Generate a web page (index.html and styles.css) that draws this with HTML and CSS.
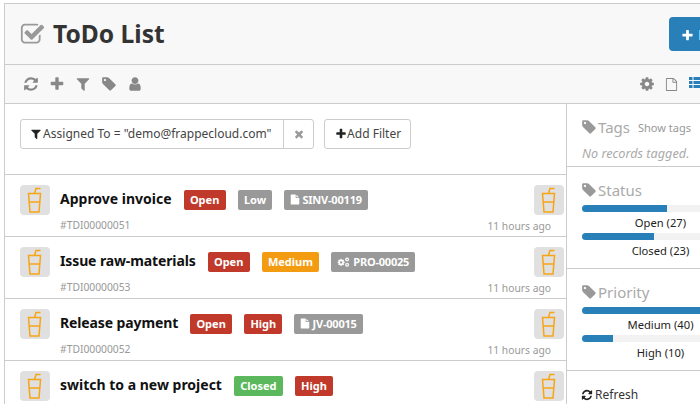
FILE: index.html
```html
<!DOCTYPE html>
<html lang="en">
<head>
<meta charset="UTF-8">
<meta name="viewport" content="width=device-width, initial-scale=1.0">
<title>ToDo List</title>
<link rel="stylesheet" href="styles.css">
</head>
<body>
<svg class="sprite" xmlns="http://www.w3.org/2000/svg">
  <symbol id="i-plus" viewBox="0 0 1792 1792"><path d="M1600 736v192q0 40-28 68t-68 28h-416v416q0 40-28 68t-68 28h-192q-40 0-68-28t-28-68v-416h-416q-40 0-68-28t-28-68v-192q0-40 28-68t68-28h416v-416q0-40 28-68t68-28h192q40 0 68 28t28 68v416h416q40 0 68 28t28 68z"/></symbol>
  <symbol id="i-filter" viewBox="0 0 1792 1792"><path d="M1595 295q17 41-14 70l-493 493v742q0 42-39 59-13 5-25 5-27 0-45-19l-256-256q-19-19-19-45v-486l-493-493q-31-29-14-70 17-39 59-39h1280q42 0 59 39z"/></symbol>
  <symbol id="i-tag" viewBox="0 0 1792 1792"><path d="M576 448q0-53-37.500-90.500t-90.500-37.500-90.500 37.500-37.500 90.500 37.500 90.500 90.500 37.500 90.500-37.500 37.500-90.500zm1067 576q0 53-37 90l-491 492q-39 37-91 37-53 0-90-37l-715-716q-38-37-64.500-101t-26.500-117v-416q0-52 38-90t90-38h416q53 0 117 26.500t102 64.500l715 714q37 39 37 91z"/></symbol>
  <symbol id="i-user" viewBox="0 0 1792 1792"><path d="M1536 1399q0 109-62.500 187t-150.500 78h-854q-88 0-150.500-78t-62.500-187q0-85 8.500-160.500t31.500-152 58.500-131 94-89 134.500-34.500q131 128 313 128t313-128q76 0 134.500 34.500t94 89 58.500 131 31.500 152 8.500 160.500zm-256-887q0 159-112.500 271.500t-271.500 112.500-271.500-112.500-112.500-271.500 112.500-271.500 271.500-112.500 271.500 112.500 112.500 271.500z"/></symbol>
  <symbol id="i-refresh" viewBox="0 0 1792 1792"><path d="M1639 1056q0 5-1 7-64 268-268 434.500t-478 166.500q-146 0-282.500-55t-243.500-157l-129 129q-19 19-45 19t-45-19-19-45v-448q0-26 19-45t45-19h448q26 0 45 19t19 45-19 45l-137 137q71 66 161 102t187 36q134 0 250-65t186-179q11-17 53-117 8-23 30-23h192q13 0 22.500 9.500t9.500 22.500zm25-800v448q0 26-19 45t-45 19h-448q-26 0-45-19t-19-45 19-45l138-138q-148-137-349-137-134 0-250 65t-186 179q-11 17-53 117-8 23-30 23h-199q-13 0-22.500-9.500t-9.500-22.500v-7q65-268 270-434.500t480-166.500q146 0 284 55.500t245 156.500l130-129q19-19 45-19t45 19 19 45z"/></symbol>
  <symbol id="i-cog" viewBox="0 0 1792 1792"><path d="M1152 896q0-106-75-181t-181-75-181 75-75 181 75 181 181 75 181-75 75-181zm512-109v222q0 12-8 23t-20 13l-185 28q-19 54-39 91 35 50 107 138 10 12 10 25t-9 23q-27 37-99 108t-94 71q-12 0-26-9l-138-108q-44 23-91 38-16 136-29 186-7 28-36 28h-222q-14 0-24.500-8.500t-11.500-21.500l-28-184q-49-16-90-37l-141 107q-10 9-25 9-14 0-25-11-126-114-165-168-7-10-7-23 0-12 8-23 15-21 51-66.500t54-70.500q-27-50-41-99l-183-27q-13-2-21-12.500t-8-23.500v-222q0-12 8-23t19-13l186-28q14-46 39-92-40-57-107-138-10-12-10-24 0-10 9-23 26-36 98.500-107.500t94.500-71.500q13 0 26 10l138 107q44-23 91-38 16-136 29-186 7-28 36-28h222q14 0 24.500 8.500t11.500 21.500l28 184q49 16 90 37l142-107q9-9 24-9 13 0 25 10 129 119 165 170 7 8 7 22 0 12-8 23-15 21-51 66.500t-54 70.500q26 50 41 98l183 28q13 2 21 12.500t8 23.500z"/></symbol>
  <symbol id="i-file-o" viewBox="0 0 1792 1792"><path d="M1596 380q28 28 48 76t20 88v1152q0 40-28 68t-68 28h-1344q-40 0-68-28t-28-68v-1600q0-40 28-68t68-28h896q40 0 88 20t76 48zm-444-244v376h376q-10-29-22-41l-313-313q-12-12-41-22zm384 1528v-1024h-416q-40 0-68-28t-28-68v-416h-768v1536h1280z"/></symbol>
  <symbol id="i-file" viewBox="0 0 1792 1792"><path d="M1596 476q14 14 28 36h-472v-472q22 14 36 28zm-476 164h544v1056q0 40-28 68t-68 28h-1344q-40 0-68-28t-28-68v-1600q0-40 28-68t68-28h800v544q0 40 28 68t68 28z"/></symbol>
  <symbol id="i-check" viewBox="0 0 1792 1792"><path d="M1472 930v318q0 119-84.500 203.500t-203.500 84.500h-832q-119 0-203.500-84.500t-84.500-203.500v-832q0-119 84.500-203.500t203.500-84.500h832q63 0 117 25 15 7 18 23 3 17-9 29l-49 49q-10 10-23 10-3 0-9-2-23-6-45-6h-832q-66 0-113 47t-47 113v832q0 66 47 113t113 47h832q66 0 113-47t47-113v-254q0-13 9-22l64-64q10-10 23-10 6 0 12 3 20 8 20 29zm231-489l-814 814q-24 24-57 24t-57-24l-430-430q-24-24-24-57t24-57l110-110q24-24 57-24t57 24l263 263 647-647q24-24 57-24t57 24l110 110q24 24 24 57t-24 57z"/></symbol>
  <symbol id="i-times" viewBox="0 0 1792 1792"><path d="M1490 1322q0 40-28 68l-136 136q-28 28-68 28t-68-28l-294-294-294 294q-28 28-68 28t-68-28l-136-136q-28-28-28-68t28-68l294-294-294-294q-28-28-28-68t28-68l136-136q28-28 68-28t68 28l294 294 294-294q28-28 68-28t68 28l136 136q28 28 28 68t-28 68l-294 294 294 294q28 28 28 68z"/></symbol>
  <symbol id="i-list" viewBox="0 0 16 14"><path d="M0 0h3.500v3H0zM4.500 0H16v3H4.500zM0 4h3.500v3H0zM4.500 4H16v3H4.500zM0 8h3.500v3H0zM4.500 8H16v3H4.500z"/></symbol>
  <symbol id="i-cogs" viewBox="0 0 2048 1792"><use href="#i-cog" x="0" y="300" width="1300" height="1300"/><use href="#i-cog" x="1200" y="100" width="780" height="780"/><use href="#i-cog" x="1200" y="950" width="780" height="780"/></symbol>
  <symbol id="i-cup" viewBox="0 0 30 30">
    <path d="M8.500 8.500h12l-1.500 18.500h-9zM9 17h11M14.500 8.500l1.500-5h4.500" fill="none" stroke="#f7a416" stroke-width="1.500"/>
  </symbol>
</svg>

<div class="page">
  <header class="page-head">
    <svg class="title-icon"><use href="#i-check"/></svg>
    <h1 class="title">ToDo List</h1>
    <button class="btn-new"><svg class="ico-13"><use href="#i-plus"/></svg> New</button>
  </header>

  <div class="toolbar">
    <div class="tool-group">
      <svg class="tool"><use href="#i-refresh"/></svg>
      <svg class="tool"><use href="#i-plus"/></svg>
      <svg class="tool"><use href="#i-filter"/></svg>
      <svg class="tool"><use href="#i-tag"/></svg>
      <svg class="tool"><use href="#i-user"/></svg>
    </div>
    <div class="tool-group tool-right">
      <svg class="tool"><use href="#i-cog"/></svg>
      <svg class="tool tool-file"><use href="#i-file-o"/></svg>
      <svg class="tool tool-active"><use href="#i-list"/></svg>
    </div>
  </div>

  <div class="content">
    <main class="main">
      <div class="filters">
        <div class="filter-box">
          <span class="filter-text"><svg class="ico-12 dark tight-ico"><use href="#i-filter"/></svg> Assigned To = "demo@frappecloud.com"</span>
          <span class="filter-close"><svg class="ico-12 grey"><use href="#i-times"/></svg></span>
        </div>
        <div class="add-filter"><span class="add-filter-text"><svg class="ico-12 dark"><use href="#i-plus"/></svg> Add Filter</span></div>
      </div>

      <div class="row">
        <svg class="avatar"><use href="#i-cup"/></svg>
        <div class="row-body">
          <div class="row-title">
            <span class="subject">Approve invoice</span>
            <span class="badge red">Open</span>
            <span class="badge grey-bg">Low</span>
            <span class="badge doc grey-bg"><svg class="ico-file"><use href="#i-file"/></svg>SINV-00119</span>
          </div>
          <div class="row-id">#TDI00000051</div>
        </div>
        <div class="row-side">
          <svg class="avatar"><use href="#i-cup"/></svg>
          <span class="row-time">11 hours ago</span>
        </div>
      </div>

      <div class="row">
        <svg class="avatar"><use href="#i-cup"/></svg>
        <div class="row-body">
          <div class="row-title">
            <span class="subject subject-tight">Issue raw-materials</span>
            <span class="badge red">Open</span>
            <span class="badge orange">Medium</span>
            <span class="badge doc grey-bg"><svg class="ico-cogs"><use href="#i-cogs"/></svg>PRO-00025</span>
          </div>
          <div class="row-id">#TDI00000053</div>
        </div>
        <div class="row-side">
          <svg class="avatar"><use href="#i-cup"/></svg>
          <span class="row-time">11 hours ago</span>
        </div>
      </div>

      <div class="row">
        <svg class="avatar"><use href="#i-cup"/></svg>
        <div class="row-body">
          <div class="row-title">
            <span class="subject subject-tight">Release payment</span>
            <span class="badge red">Open</span>
            <span class="badge red">High</span>
            <span class="badge doc grey-bg"><svg class="ico-file"><use href="#i-file"/></svg>JV-00015</span>
          </div>
          <div class="row-id">#TDI00000052</div>
        </div>
        <div class="row-side">
          <svg class="avatar"><use href="#i-cup"/></svg>
          <span class="row-time">11 hours ago</span>
        </div>
      </div>

      <div class="row">
        <svg class="avatar"><use href="#i-cup"/></svg>
        <div class="row-body">
          <div class="row-title">
            <span class="subject">switch to a new project</span>
            <span class="badge green">Closed</span>
            <span class="badge red">High</span>
          </div>
        </div>
        <div class="row-side">
          <svg class="avatar"><use href="#i-cup"/></svg>
        </div>
      </div>
    </main>

    <aside class="sidebar">
      <section class="side-section side-tags">
        <div class="side-head">
          <svg class="ico-14"><use href="#i-tag"/></svg>
          <span class="side-title">Tags</span>
          <span class="show-tags">Show tags</span>
        </div>
        <div class="no-tags">No records tagged.</div>
      </section>

      <section class="side-section side-stat">
        <div class="side-head">
          <svg class="ico-14"><use href="#i-tag"/></svg>
          <span class="side-title">Status</span>
        </div>
        <div class="bar"><div class="bar-fill" style="width: 54%"></div></div>
        <div class="bar-label">Open (27)</div>
        <div class="bar"><div class="bar-fill" style="width: 46%"></div></div>
        <div class="bar-label">Closed (23)</div>
      </section>

      <section class="side-section side-stat">
        <div class="side-head">
          <svg class="ico-14"><use href="#i-tag"/></svg>
          <span class="side-title">Priority</span>
        </div>
        <div class="bar"><div class="bar-fill" style="width: 80%"></div></div>
        <div class="bar-label">Medium (40)</div>
        <div class="bar"><div class="bar-fill" style="width: 20%"></div></div>
        <div class="bar-label">High (10)</div>
      </section>

      <div class="refresh"><svg class="ico-12 dark tight-ico"><use href="#i-refresh"/></svg> Refresh</div>
    </aside>
  </div>
</div>
</body>
</html>
```

FILE: styles.css
```css
* {
  margin: 0;
  padding: 0;
  box-sizing: border-box;
}

body {
  height: 404px;
  background: #fff;
  font-family: "Noto Sans", "Open Sans", sans-serif;
  overflow: hidden;
}

svg {
  fill: currentColor;
}

.sprite {
  display: none;
}

.page {
  width: 800px;
  margin: 3px 0 0 4px;
  border-top: 1px solid #ccc;
  border-left: 1px solid #ccc;
}

/* Page header */
.page-head {
  height: 61px;
  display: flex;
  align-items: center;
  background: #f8f8f8;
  border-bottom: 1px solid #ccc;
  padding-left: 15px;
}

.title-icon {
  width: 25px;
  height: 25px;
  color: #999;
  margin-right: 8px;
}

.title {
  font-size: 24.6px;
  font-weight: 700;
  color: #333;
  line-height: 32px;
}

.btn-new {
  margin-left: 504px;
  width: 100px;
  height: 34px;
  background: #2980b9;
  color: #fff;
  border: 0;
  border-radius: 4px;
  font: 700 14px "Noto Sans", sans-serif;
  text-align: left;
  padding-left: 12px;
}

.btn-new svg {
  margin-right: 1px;
}

/* Toolbar */
.toolbar {
  height: 39px;
  display: flex;
  align-items: center;
  background: #f8f8f8;
  border-bottom: 1px solid #ccc;
  padding-left: 18px;
}

.tool-group {
  display: flex;
  align-items: center;
  gap: 10px;
  color: #888;
}

.tool-right {
  margin-left: 496px;
  gap: 9px;
}

.tool {
  width: 16px;
  height: 16px;
}

.tool-file {
  width: 13px;
  height: 15px;
  margin: 0 2px 0 1px;
}

.tool-active {
  color: #2980b9;
}

/* Layout */
.content {
  display: flex;
}

.main {
  width: 561px;
  flex: none;
}

.filters {
  height: 71px;
  display: flex;
  gap: 10px;
  padding: 15px 0 0 15px;
  border-bottom: 1px solid #ccc;
}

.filter-box,
.add-filter {
  height: 30px;
  display: flex;
  align-items: center;
  border: 1px solid #ccc;
  border-radius: 3px;
  font-size: 12px;
  color: #444;
}

.filter-box {
  width: 294px;
}

.filter-text {
  flex: 1;
  padding: 0 0 2px 10px;
  white-space: nowrap;
}

.filter-close {
  width: 30px;
  height: 28px;
  display: flex;
  align-items: center;
  justify-content: center;
  border-left: 1px solid #ccc;
}

.add-filter {
  width: 87px;
  padding-left: 10px;
  white-space: nowrap;
}

.add-filter-text {
  padding-bottom: 2px;
}

.add-filter-text svg {
  margin-right: -3px;
}

.ico-12 {
  width: 12px;
  height: 12px;
  vertical-align: -2px;
}

.tight-ico {
  margin: 0 -2px 0 -1px;
}

.ico-13 {
  width: 13px;
  height: 13px;
  vertical-align: -2px;
}

.ico-14 {
  width: 16px;
  height: 16px;
  margin-left: -1px;
  color: #999;
}

.ico-file {
  width: 10px;
  height: 11px;
  margin-right: 2px;
  vertical-align: -1px;
}

.ico-cogs {
  width: 13px;
  height: 12px;
  margin-right: 3px;
  vertical-align: -2px;
}

.dark {
  color: #222;
}

.grey {
  color: #999;
}

/* List rows */
.row {
  height: 62px;
  display: flex;
  padding: 10px 2px 0 15px;
  border-bottom: 1px solid #ccc;
}

.avatar {
  width: 30px;
  height: 30px;
  flex: none;
  background: #e0e0e0;
  border-radius: 4px;
}

.row-body {
  flex: 1;
  padding-left: 10px;
}

.row-title {
  height: 30px;
  display: flex;
  align-items: center;
  gap: 12px;
}

.subject {
  font-size: 14px;
  font-weight: 700;
  color: #111;
  padding-bottom: 4px;
}

.subject-tight {
  letter-spacing: -0.12px;
}

.badge {
  height: 20px;
  display: inline-block;
  padding: 0 6.3px;
  border-radius: 2px;
  color: #fff;
  font-size: 11px;
  font-weight: 700;
  line-height: 20px;
  white-space: nowrap;
}

.doc {
  padding: 0 6px;
  letter-spacing: -0.2px;
}

.red {
  background: #c0392b;
}

.orange {
  background: #f39c12;
}

.green {
  background: #5cb85c;
}

.grey-bg {
  background: #999;
}

.row-id {
  font-size: 10.3px;
  color: #999;
  margin-top: 3px;
}

.row-side {
  width: 80px;
  display: flex;
  flex-direction: column;
  align-items: flex-end;
}

.row-time {
  font-size: 10.3px;
  color: #999;
  margin-top: 4px;
  margin-right: 13px;
  white-space: nowrap;
}

/* Sidebar */
.sidebar {
  width: 230px;
  flex: none;
  border-left: 1px solid #ccc;
}

.side-section {
  padding: 0 15px;
  border-bottom: 1px solid #ccc;
}

.side-tags {
  height: 63px;
  padding-top: 13px;
}

.side-stat {
  height: 102px;
  padding-top: 13px;
}

.side-head {
  display: flex;
  align-items: center;
  gap: 1px;
  height: 20px;
  margin-bottom: 2px;
}

.side-title {
  font-size: 15px;
  color: #aaa;
}

.show-tags {
  font-size: 11px;
  color: #999;
  margin-left: 7px;
}

.no-tags {
  font-size: 12.7px;
  font-style: italic;
  color: #aaa;
  margin-top: 7px;
}

.bar {
  width: 157px;
  height: 7px;
  margin-top: 3px;
  background: #f2f2f2;
  border-radius: 4px;
  overflow: hidden;
}

.side-head + .bar {
  margin-top: 5px;
}

.bar-fill {
  height: 100%;
  background: #2980b9;
}

.bar-label {
  width: 157px;
  margin-top: 3px;
  font-size: 11.2px;
  line-height: 15px;
  color: #222;
  text-align: center;
}

.refresh {
  padding: 15px 0 0 15px;
  font-size: 12px;
  color: #333;
}

.refresh .tight-ico {
  margin-right: -1px;
}
```
